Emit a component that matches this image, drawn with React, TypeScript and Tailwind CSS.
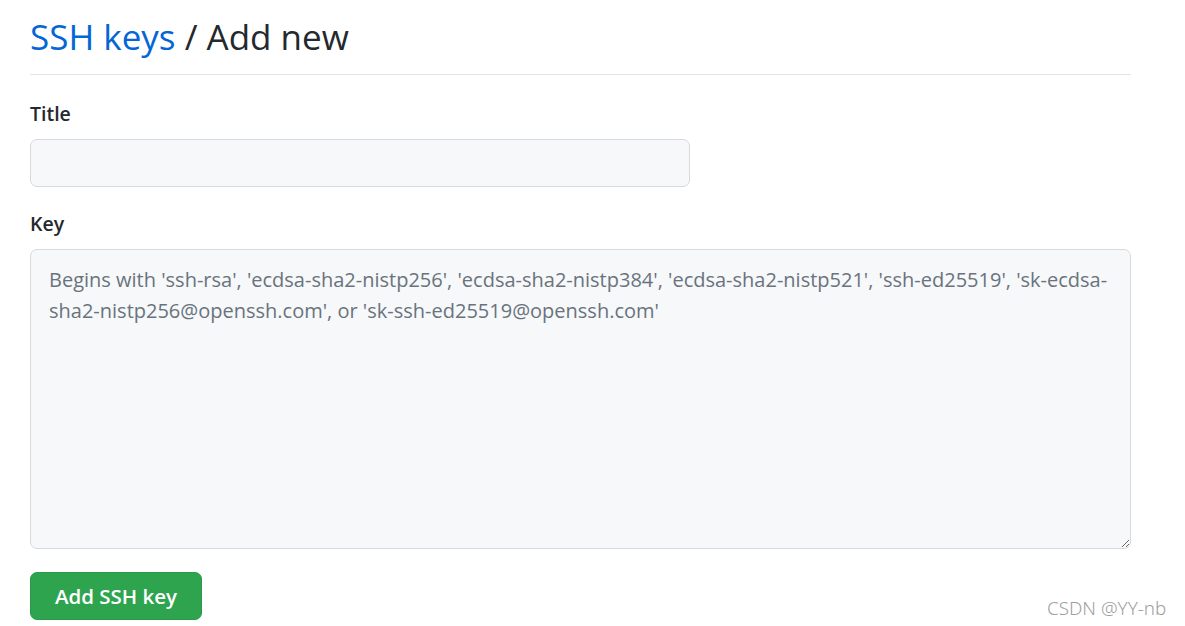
import React from 'react';

const placeholder =
  "Begins with 'ssh-rsa', 'ecdsa-sha2-nistp256', 'ecdsa-sha2-nistp384', 'ecdsa-sha2-nistp521', 'ssh-ed25519', 'sk-ecdsa-sha2-nistp256@openssh.com', or 'sk-ssh-ed25519@openssh.com'";

export default function App() {
  return (
    <div
      className="relative w-[1185px] h-[626px] bg-white overflow-hidden text-[#24292e]"
      style={{ fontFamily: '"Open Sans", "Noto Sans", sans-serif' }}
    >
      <div className="w-[1101px] ml-[30px] pt-[14px]">
        {/* Subhead */}
        <div className="pb-[14px] border-b border-[#e1e4e8]">
          <h2 className="text-[35px] leading-[46px] font-normal">
            <a href="#" className="text-[#0366d6]">SSH keys</a> / Add new
          </h2>
        </div>

        <form className="mt-[26px]" onSubmit={(e) => e.preventDefault()}>
          <div>
            <label className="block text-[19.5px] font-semibold leading-[26px]">Title</label>
            <input
              type="text"
              className="mt-[12px] block w-[660px] h-[48px] rounded-[7px] border border-[#d6dadf] bg-[#f6f8fa] px-[18px] text-[20px] outline-none"
            />
          </div>

          <div className="mt-[24px]">
            <label className="block text-[19.5px] font-semibold leading-[26px]">Key</label>
            <textarea
              placeholder={placeholder}
              className="mt-[12px] block w-[1101px] h-[300px] rounded-[7px] border border-[#d6dadf] bg-[#f6f8fa] px-[18px] py-[14px] text-[20px] leading-[31px] placeholder:text-[#6a737d] outline-none"
            />
          </div>

          <button
            type="submit"
            className="mt-[23px] h-[48px] w-[172px] rounded-[7px] bg-[#2ea44f] border border-[#2a9a4a] text-white text-[20.5px] font-semibold"
          >
            Add SSH key
          </button>
        </form>
      </div>

      <div
        className="absolute left-[1047px] top-[594px] text-[18.8px] font-light text-[#a0a0a0]"
        style={{ fontFamily: '"Noto Sans", sans-serif' }}
      >
        CSDN @YY-nb
      </div>
    </div>
  );
}
